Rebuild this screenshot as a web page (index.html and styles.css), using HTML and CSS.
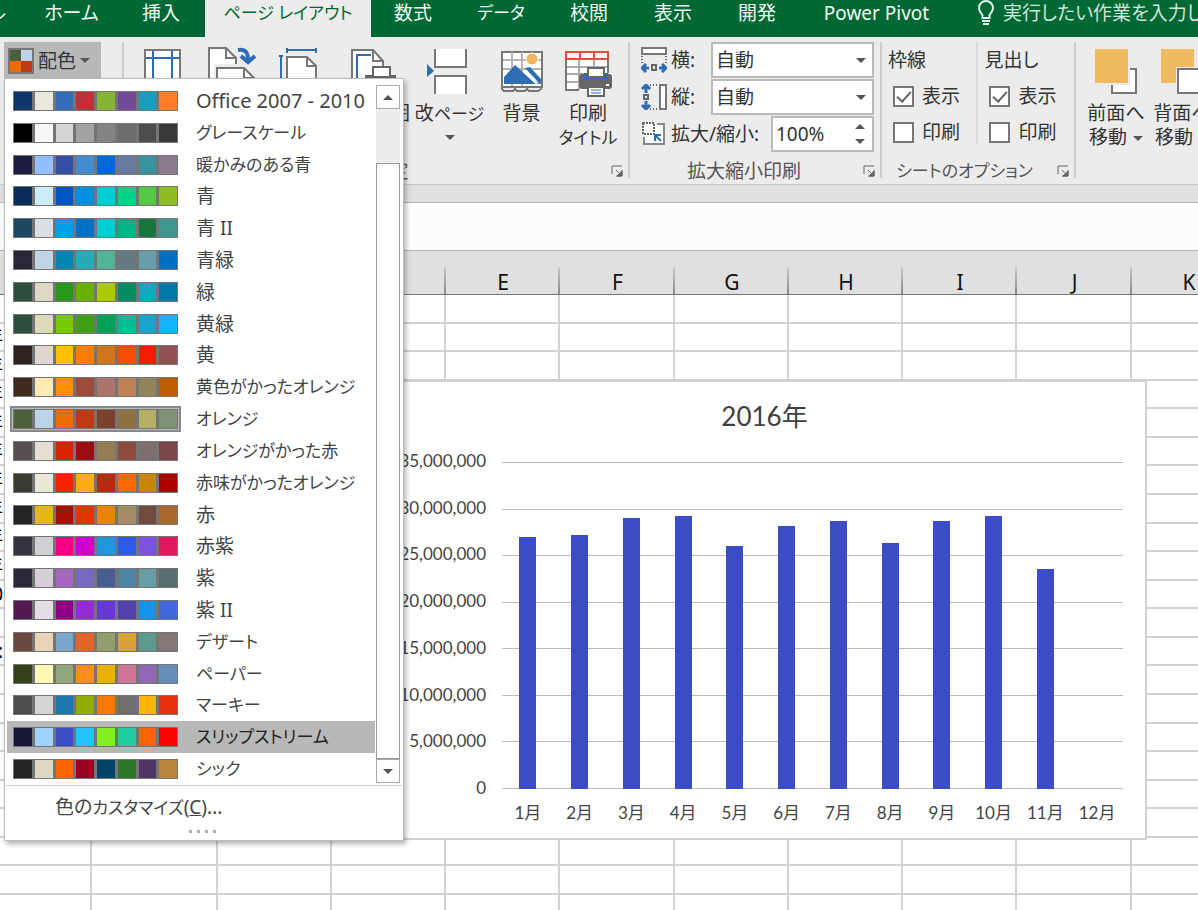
FILE: index.html
```html
<!DOCTYPE html>
<html lang="ja">
<head>
<meta charset="utf-8">
<title>ページ レイアウト</title>
<link rel="stylesheet" href="styles.css">
</head>
<body>
<div class="app">
  <nav class="tabs">
    <button class="tab tab-file">ファイル</button>
    <button class="tab tab-home">ホーム</button>
    <button class="tab tab-insert">挿入</button>
    <button class="tab tab-layout active kana">ページ レイアウト</button>
    <button class="tab">数式</button>
    <button class="tab tab-data kana">データ</button>
    <button class="tab">校閲</button>
    <button class="tab">表示</button>
    <button class="tab">開発</button>
    <button class="tab tab-pivot">Power Pivot</button>
    <button class="tell-me">
      <svg width="18" height="26" viewBox="0 0 18 26" fill="none" stroke="#e4f2ea" stroke-width="2"><path d="M5.5 18v-3C3.500 12.500 2 10.500 2 8a7 7 0 0 1 14 0c0 2.500-1.500 4.500-3.500 7v3z"/><path d="M5 21h8M6 24h6"/></svg>
      <span>実行したい作業を入力してください</span>
    </button>
  </nav>

  <div class="ribbon">
    <section class="group group-theme">
      <div class="theme-wrap">
        <button class="colors-button">
          <svg width="26" height="26" viewBox="0 0 26 26"><rect width="26" height="26" fill="#777"/><path fill="#4d5f3a" d="M2 2h11v11H2z"/><path fill="#bcd3e8" d="M13 2h11v11H13z"/><path fill="#ee6c00" d="M2 13h11v11H2z"/><path fill="#bd3b14" d="M13 13h11v11H13z"/></svg>
          <span>配色</span><i class="caret"></i>
        </button>
        <div class="menu">
          <div class="menu-main">
            <div class="palette-list" id="palettes"></div>
            <div class="scrollbar">
              <button class="scroll-button" aria-label="上へ"><i class="caret up"></i></button>
              <div class="track"><div class="thumb"></div></div>
              <button class="scroll-button" aria-label="下へ"><i class="caret"></i></button>
            </div>
          </div>
          <button class="customize">色の<span class="kana">カスタマイズ</span>(<u>C</u>)...</button>
          <div class="grip"><i></i><i></i><i></i><i></i></div>
        </div>
      </div>
    </section>

    <section class="group group-page">
      <div class="group-body">
        <button class="big w68"><svg width="44" height="54" viewBox="0 0 44 54" fill="none"><rect x="5" y="3" width="35" height="46" fill="#fff" stroke="#777" stroke-width="2"/><path d="M13 4v44M32 4v44M6 11h33" stroke="#2e6db4" stroke-width="2"/></svg><span>余白</span></button>
        <button class="big w68"><svg width="52" height="54" viewBox="0 0 52 54" fill="none"><path d="M5 49V1h17l10 10v38z" fill="#fff" stroke="#777" stroke-width="2"/><path d="M22 1v10h10" stroke="#777" stroke-width="2"/><path d="M10 17h35v32H10z" fill="#ececec"/><path d="M13 49V21h27l10 10v18z" fill="#fff" stroke="#777" stroke-width="2"/><path d="M40 21v10h10" stroke="#777" stroke-width="2"/><path d="M34 3c8-1 10 3 10 10" stroke="#2e6db4" stroke-width="4"/><path d="M37 9l7 6 7-6" stroke="#2e6db4" stroke-width="4"/></svg><span>印刷の<br>向き</span></button>
        <button class="big w71"><svg width="44" height="54" viewBox="0 0 44 54" fill="none"><path d="M9 49V10h20l9 9v30z" fill="#fff" stroke="#777" stroke-width="2"/><path d="M29 10v9h9" stroke="#777" stroke-width="2"/><path d="M9 3h29M9 1v5M38 1v5M3 9v41M1 9h4" stroke="#2e6db4" stroke-width="2"/></svg><span class="kana">サイズ</span></button>
        <button class="big w74"><svg width="52" height="54" viewBox="0 0 52 54" fill="none"><path d="M6 49V3h21l10 11v35z" fill="#fff" stroke="#777" stroke-width="2"/><path d="M27 3v11h10" stroke="#777" stroke-width="2"/><path d="M11 40V8h14" stroke="#2e6db4" stroke-width="2"/><path d="M19 28h31v16H19z" fill="#666"/><path d="M27 20h17v10H27z" fill="#fff" stroke="#666" stroke-width="2"/></svg><span>印刷範囲</span></button>
        <button class="big w81"><svg width="46" height="54" viewBox="0 0 46 54" fill="none"><path d="M8 2v18h31V2" fill="#fff" stroke="#777" stroke-width="2"/><path d="M8 47V29h31v18" fill="#fff" stroke="#777" stroke-width="2"/><path d="M0 17v13l7-6z" fill="#2e6db4"/></svg><span>改<span class="kana">ページ</span></span><i class="caret"></i></button>
        <button class="big w63"><svg width="44" height="54" viewBox="0 0 44 54" fill="none"><path d="M2 5h40v35H2z" fill="#fff" stroke="#777" stroke-width="2"/><path d="M12 5v34M22 5v34M3 13h38M3 22h38" stroke="#b5b5b5" stroke-width="2"/><circle cx="32" cy="12" r="6" fill="#f0b55e" stroke="#fff"/><path d="M4 37V30l11-12 10 9 15 10z" fill="#2e6db4"/><path d="M25 21l5-1 11 12v5h-1z" fill="#2e6db4"/><path d="M23 24l14 13" stroke="#fff" stroke-width="2"/><path d="M2 40v2l2 2h9l2-2v-2m0 2l2 2h8l2-2v-2m0 2l2 2h9l3-2v-2" stroke="#777" stroke-width="2"/></svg><span>背景</span></button>
        <button class="big w70"><svg width="48" height="54" viewBox="0 0 48 54" fill="none"><path d="M2 5h42v38H2z" fill="#fff"/><path d="M2 20h42M2 27h20M2 35h20M15 13v30M30 13v14" stroke="#aaa" stroke-width="2"/><path d="M2 12v31h13M44 12v14" stroke="#777" stroke-width="2"/><path d="M2 5h42v7H2zM16 5v7M30 5v7" fill="#fff" stroke="#e34f36" stroke-width="2"/><path d="M15 30q0-3 3-3h27q3 0 3 3v9q0 3-3 3H18q-3 0-3-3z" fill="#666"/><path d="M20 26h24v6H20z" fill="#2e6db4"/><path d="M24 21h16v9H24z" fill="#fff" stroke="#666" stroke-width="2"/><path d="M24 40h16v9H24z" fill="#fff" stroke="#666" stroke-width="2"/><path d="M27 43h10M27 46h10" stroke="#2e6db4" stroke-width="1"/><path d="M42 38h3" stroke="#fff" stroke-width="2"/></svg><span>印刷<br><span class="kana">タイトル</span></span></button>
      </div>
      <footer class="group-name"><span>ページ設定</span><svg class="launcher" width="12" height="12" viewBox="0 0 12 12" fill="none" stroke="#666"><path d="M1 9V1h10M5 5l4 4M11 5v6H5"/><path d="M11 6v5H6z" fill="#666"/></svg></footer>
    </section>

    <section class="group group-scale">
      <div class="group-body scale-body">
        <div class="field"><svg width="26" height="26" viewBox="0 0 26 26" fill="none"><path d="M1 1h24v6H1z" fill="#fff" stroke="#777" stroke-width="2"/><path d="M1 9v7M25 9v7" stroke="#666" stroke-width="2" stroke-dasharray="1 2"/><path d="M11 18h4v5h-4z" stroke="#666" stroke-width="2"/><path d="M1 21h7M5 17l-4 4 4 4M25 21h-7M21 17l4 4-4 4" stroke="#2e6db4" stroke-width="3"/></svg><label for="w">横:</label><span class="combo"><select id="w"><option>自動</option></select><i class="caret"></i></span></div>
        <div class="field"><svg width="26" height="26" viewBox="0 0 26 26" fill="none"><path d="M19 1h6v24h-6z" fill="#fff" stroke="#777" stroke-width="2"/><path d="M9 1h8M9 25h8" stroke="#666" stroke-width="2" stroke-dasharray="1 2"/><path d="M3 11h4v4H3z" stroke="#666" stroke-width="2"/><path d="M5 1v8M1 5l4-4 4 4M5 25v-8M1 21l4 4 4-4" stroke="#2e6db4" stroke-width="3"/></svg><label for="h">縦:</label><span class="combo"><select id="h"><option>自動</option></select><i class="caret"></i></span></div>
        <div class="field"><svg width="26" height="26" viewBox="0 0 26 26" fill="none"><path d="M3 3h20v20H3z" fill="#fff"/><path d="M16 3h7v20H3v-7" stroke="#888" stroke-width="2"/><path d="M2 2h11v11H2z" fill="#fff" stroke="#666" stroke-width="2" stroke-dasharray="2 1"/><path d="M14 14l6 6M14 20v-6h6" stroke="#2e6db4" stroke-width="2"/></svg><label for="z">拡大/縮小:</label><span class="combo spin"><input id="z" type="text" value="100%"><span class="spin-arrows"><i class="caret up"></i><i class="caret"></i></span></span></div>
      </div>
      <footer class="group-name"><span>拡大縮小印刷</span><svg class="launcher" width="12" height="12" viewBox="0 0 12 12" fill="none" stroke="#666"><path d="M1 9V1h10M5 5l4 4M11 5v6H5"/><path d="M11 6v5H6z" fill="#666"/></svg></footer>
    </section>

    <section class="group group-sheet">
      <div class="group-body sheet-body">
        <div class="option-col"><span>枠線</span><label><input type="checkbox" checked>表示</label><label><input type="checkbox">印刷</label></div>
        <div class="option-col"><span>見出し</span><label><input type="checkbox" checked>表示</label><label><input type="checkbox">印刷</label></div>
      </div>
      <footer class="group-name"><span class="kana">シートのオプション</span><svg class="launcher" width="12" height="12" viewBox="0 0 12 12" fill="none" stroke="#666"><path d="M1 9V1h10M5 5l4 4M11 5v6H5"/><path d="M11 6v5H6z" fill="#666"/></svg></footer>
    </section>

    <section class="group group-arrange">
      <div class="group-body">
        <button class="big w66"><svg width="44" height="54" viewBox="0 0 44 54" fill="none"><path d="M18 22h24v24H18z" fill="#fff" stroke="#777" stroke-width="2"/><path d="M0 0h36v38H0z" fill="#ececec"/><path d="M1 2h33v34H1z" fill="#f0bb60"/></svg><span>前面へ<br>移動 <i class="caret"></i></span></button>
        <button class="big w66"><svg width="44" height="54" viewBox="0 0 44 54" fill="none"><path d="M1 2h33v34H1z" fill="#f0bb60"/><path d="M16 20h28v28H16z" fill="#ececec"/><path d="M18 22h24v24H18z" fill="#fff" stroke="#777" stroke-width="2"/></svg><span>背面へ<br>移動 <i class="caret"></i></span></button>
      </div>
    </section>
  </div>

  <div class="band"></div>
  <div class="formula-bar"></div>

  <main class="sheet">
    <table class="grid">
      <colgroup><col class="c91"><col class="c126"><col class="c114"><col class="c114"><col class="c114"><col class="c115"><col class="c114"><col class="c114"><col class="c114"><col class="c115"><col class="c114"></colgroup>
      <thead><tr><th>A</th><th>B</th><th>C</th><th>D</th><th>E</th><th>F</th><th>G</th><th>H</th><th>I</th><th>J</th><th>K</th></tr></thead>
      <tbody id="rows"></tbody>
    </table>
    <figure class="chart">
      <figcaption>2016年</figcaption>
      <div class="y-axis"><span>35,000,000</span><span>30,000,000</span><span>25,000,000</span><span>20,000,000</span><span>15,000,000</span><span>10,000,000</span><span>5,000,000</span><span>0</span></div>
      <div class="plot">
        <div class="lines"><i></i><i></i><i></i><i></i><i></i><i></i><i></i><i></i></div>
        <div class="bars" id="bars"></div>
      </div>
      <div class="x-axis" id="months"></div>
    </figure>
  </main>
</div>
<script src="script.js"></script>
</body>
</html>
```
FILE: styles.css
```css
* { box-sizing: border-box; }
body, button, input, select {
  font-family: "Noto Sans", "Noto Sans CJK JP", sans-serif;
  font-size: 19px;
  line-height: 24px;
  font-feature-settings: "palt";
  color: #444;
}
body { margin: 0; background: #fff; }
button { border: 0; padding: 0; background: none; white-space: nowrap; }
.kana { font-size: 17px; }
.app { height: 100vh; display: flex; flex-direction: column; overflow: hidden; }

.tabs { display: flex; flex: none; height: 37px; background: #006834; overflow: hidden; }
.tab { flex: none; width: 84px; height: 37px; padding-bottom: 12px; color: #f0f8f3; display: flex; justify-content: center; align-items: center; }
.tab-file { width: 26px; justify-content: flex-end; padding-right: 20px; }
.tab-home { width: 91px; }
.tab-insert { width: 88px; }
.tab-layout { width: 166px; }
.tab-data { width: 92px; }
.tab-pivot { width: 155px; }
.tab.active { background: #ececec; color: #006834; }
.tell-me { flex: none; display: flex; gap: 8px; align-items: center; padding: 0 0 12px 23px; color: #cfe5d8; }

.ribbon { flex: none; display: flex; height: 148px; background: #ececec; border-bottom: 1px solid #c8c8c8; }
.group { flex: none; position: relative; display: flex; flex-direction: column; justify-content: space-between; border-right: 2px solid #ccc; margin: 5px 0 6px; }
.group-theme { width: 124px; padding-left: 4px; }
.group-page { width: 506px; padding-left: 4px; }
.group-scale { width: 252px; padding-left: 11px; }
.group-sheet { width: 194px; padding-left: 6px; }
.group-arrange { border: 0; padding-left: 7px; }
.group-body { display: flex; }
.group-name { display: flex; align-items: center; color: #555; padding-right: 5px; height: 14px; }
.group-name span { flex: 1; text-align: center; padding-right: 16px; white-space: nowrap; }
.launcher { flex: none; }

.caret { display: inline-block; border: 5px solid transparent; border-top-color: #555; border-bottom: 0; vertical-align: middle; }
.caret.up { border: 5px solid transparent; border-bottom-color: #555; border-top: 0; }

.theme-wrap { position: relative; align-self: flex-start; }
.colors-button { display: flex; align-items: center; gap: 4px; width: 97px; height: 37px; padding-left: 4px; background: #b8b8b8; color: #333; }

.big { flex: none; display: flex; flex-direction: column; align-items: center; padding-top: 5px; color: #333; }
.big svg { flex: none; }
.big > .caret { margin-top: 9px; }
.big .caret { margin-left: 1px; }
.w63 { width: 63px; } .w66 { width: 66px; } .w68 { width: 68px; } .w70 { width: 70px; }
.w71 { width: 71px; } .w74 { width: 74px; } .w81 { width: 81px; }

.scale-body { flex-direction: column; gap: 1px; }
.field { display: flex; align-items: center; gap: 4px; color: #333; white-space: nowrap; padding-right: 6px; }
.combo { position: relative; width: 163px; height: 36px; margin-left: auto; border: 2px solid #bababa; background: #fff; display: flex; align-items: center; }
.combo select, .combo input { flex: 1; width: 100%; min-width: 0; height: 32px; appearance: none; border: 0; padding: 0 0 0 3px; background: transparent; color: #333; outline: 0; }
.combo > .caret { position: absolute; right: 6px; pointer-events: none; }
.spin { width: 103px; }
.spin-arrows { flex: none; display: flex; flex-direction: column; gap: 10px; padding-right: 7px; }

.option-col { display: flex; flex-direction: column; gap: 12px; width: 97px; padding-top: 6px; color: #333; }
.option-col + .option-col { border-left: 2px solid #dadada; margin-left: -6px; padding-left: 6px; width: 100px; }
.option-col label { display: flex; align-items: center; gap: 8px; padding-left: 5px; white-space: nowrap; }
.option-col input { appearance: none; margin: 0; width: 21px; height: 21px; border: 2px solid #777; background: #fff; display: grid; place-items: center; }
.option-col input:checked::before { content: ""; width: 6px; height: 12px; border: solid #666; border-width: 0 2px 2px 0; transform: rotate(42deg); margin-bottom: 4px; }

.band { flex: none; height: 18px; background: #e0e0e0; border-bottom: 1px solid #b8b8b8; }
.formula-bar { flex: none; height: 47px; background: #fcfcfc; }

.sheet { flex: 1; position: relative; overflow: hidden; border-top: 1px solid #b4b4b4; }
.grid { border-collapse: separate; border-spacing: 0; table-layout: fixed; width: 1246px; }
.c91 { width: 92px; } .c114 { width: 114px; } .c115 { width: 115px; } .c126 { width: 126px; }
.grid th { height: 44px; padding: 19px 0 0; font-size: 21px; font-weight: 400; color: #111; border-bottom: 1px solid #777; background: linear-gradient(#c8c8c8, #888) right bottom / 2px 27px no-repeat #e0e0e0; }
.grid td { height: 29px; padding: 0; line-height: 24px; color: #000; border-right: 2px solid #d2d2d2; border-bottom: 2px solid #d2d2d2; }
.grid tr:nth-child(7n+2) td, .grid tr:nth-child(7n+4) td, .grid tr:nth-child(7n+6) td { height: 28px; }
.tail { display: block; width: 3px; direction: rtl; white-space: nowrap; }

.chart { position: absolute; left: 380px; top: 129px; width: 767px; height: 460px; margin: 0; padding: 0 22px 0 0; background: #fff; border: 2px solid #d0d0d0; display: grid; grid-template-columns: 104px 1fr; grid-template-rows: 80px 327px 1fr; column-gap: 16px; font-family: Lato, "Noto Sans CJK JP", sans-serif; font-size: 17px; color: #444; }
.chart figcaption { grid-column: 1 / 3; text-align: center; font-size: 26px; line-height: 32px; padding: 18px 0 0 24px; color: #404040; }
.y-axis { display: flex; flex-direction: column; justify-content: space-between; text-align: right; margin: -13px 0 -11px; }
.plot { position: relative; }
.lines { height: 100%; display: flex; flex-direction: column; justify-content: space-between; }
.lines i { height: 1px; background: #bbb; }
.bars { position: absolute; inset: 0; display: grid; grid-template-columns: repeat(12, 1fr); align-items: end; justify-items: center; }
.bar { width: 17px; background: #3a4dc4; }
.x-axis { grid-column: 2; display: grid; grid-template-columns: repeat(12, 1fr); text-align: center; padding-top: 12px; white-space: nowrap; }

.menu { position: absolute; z-index: 5; left: 0; top: 36px; width: 400px; background: #fff; border: 1px solid #bdbdbd; box-shadow: 2px 3px 5px rgba(0, 0, 0, .3); }
.menu-main { display: flex; height: 707px; padding: 6px 2px 0 1px; gap: 1px; margin: 0 1px; border-bottom: 1px solid #d0d0d0; }
.palette-list { flex: 1; height: 700px; display: grid; grid-template-rows: repeat(22, 1fr); }
.palette { display: flex; align-items: center; gap: 15px; padding-left: 3px; color: #444; }
.palette.hover { background: #b8b8b8; color: #222; }
.latin { font-size: 20px; }
.swatch-frame { padding: 1px; border: 2px solid transparent; }
.palette.chosen .swatch-frame { border-color: #888; background: #bbb; }
.swatches { display: grid; grid-template-columns: repeat(8, 1fr); gap: 3px; width: 165px; height: 20px; padding: 1px 1px 1px; background: #757575; }
.scrollbar { width: 24px; height: 698px; display: flex; flex-direction: column; background: #ededed; }
.scroll-button { height: 24px; border: 1px solid #aaa; background: #fff; display: grid; place-items: center; }
.track { flex: 1; display: flex; flex-direction: column; padding-top: 54px; }
.thumb { flex: 1; border: 1px solid #999; background: #fff; }
.customize { display: block; padding: 9px 0 6px 50px; }
.grip { display: flex; justify-content: center; gap: 5px; height: 14px; padding: 4px 4px 0 0; }
.grip i { width: 3px; height: 3px; background: #a4b0bd; }
```
FILE: script.js
```js
const palettes = [
  ["Office 2007 - 2010", "0f366d ebe9db 346cb8 c22f36 85b436 724997 189fbd ff7f24"],
  ["グレースケール", "000000 f7f7f7 d6d6d6 a3a3a3 848484 6d6d6d 4d4d4d 393939"],
  ["暖かみのある青", "1c1b42 94bdff 344fa5 438dce 0067da 687b9e 37949f 8d7b90"],
  ["青", "0a2c5b ceebf9 0057c3 008fdc 00ced5 00d287 54c942 8bbc20"],
  ["青 II", "1d4861 d8dee1 009fe7 0070c5 00ccd3 00b486 16783c 40968e"],
  ["青緑", "2a2838 c1d4e3 0085b5 28abb7 50b596 647a7e 699daa 0070c4"],
  ["緑", "2e4e40 dfd9c6 2b961c 6baf00 adca00 008b62 0aabbe 0078a6"],
  ["黄緑", "2e4e40 dddabe 78c900 409f18 00a157 00be94 1aa4ca 12b4ff"],
  ["黄", "2e231e dfd6d1 ffc000 ff7d00 ce761e fa4d00 f41b00 935155"],
  ["黄色がかったオレンジ", "402b22 ffe9b7 fa9000 9f4b3b ad736d bf8353 92845d bf5c00"],
  ["オレンジ", "4d5f3a bcd4e8 ee6c00 bd3b14 7d402d 8f7141 b5b164 7e9174"],
  ["オレンジがかった赤", "585050 e4dfd2 d92400 990e14 947c54 8c4b3d 7e6e70 7b474a"],
  ["赤味がかったオレンジ", "3b3c31 eae8d9 f42400 ffab1a b52c13 ff6700 c98700 b10000"],
  ["赤", "242424 e4b811 a31100 dd3700 e78500 a68b67 704b3e ab682f"],
  ["赤紫", "343441 cfd0d3 f30087 cd00cb 2295db 2e5beb 7d52df de175f"],
  ["紫", "2a2838 d6ced6 a668bf 756abd 465f90 4c86a4 669ea8 536f70"],
  ["紫 II", "551953 e5dde6 8e0083 942cd1 6638d7 5543ad 1393ef 4067db"],
  ["デザート", "694940 ead4b5 7ca7cd e26529 929e6c d6a239 5c9b8b 857677"],
  ["ペーパー", "344018 fff9b5 93a77e ff8c20 e9b100 cf7598 8f68b6 658db9"],
  ["マーキー", "4c4c4c d5d5d5 1c78a8 8fae00 ff7900 6e6e6e ffb700 e72f0b"],
  ["スリップストリーム", "171a36 9fd3ff 3a4dc4 24c4f9 84f11d 1ecca0 ff6300 ff0000"],
  ["シック", "242424 ded9c5 ff6400 990021 004369 2d7627 523366 b9863c"]
];
const list = document.getElementById("palettes");
for (const [name, colors] of palettes) {
  const row = document.createElement("button");
  const script = /[ぁ-ヶ]/.test(name) ? "kana" : /^[A-Z]/.test(name) ? "latin" : "kanji";
  row.className = "palette" + (name === "オレンジ" ? " chosen" : "") + (name === "スリップストリーム" ? " hover" : "");
  row.innerHTML = '<span class="swatch-frame"><span class="swatches">' +
    colors.split(" ").map(c => `<i style="background:#${c}"></i>`).join("") +
    `</span></span><span class="${script}">${name}</span>`;
  list.append(row);
}

const tails = ["", "年", "年", "年", "年", "年", "年", "年", "年", "年", "0", "", ":"];
const rows = document.getElementById("rows");
for (let r = 0; r < 24; r++) {
  const tr = document.createElement("tr");
  tr.innerHTML = `<td>${tails[r] ? `<span class="tail">${tails[r]}</span>` : ""}</td>` + "<td></td>".repeat(10);
  rows.append(tr);
}

const values = [77, 77.6, 83, 83.4, 74.2, 80.5, 82, 75.2, 82, 83.4, 67.4, 0];
document.getElementById("bars").innerHTML = values.map(v => `<div class="bar" style="height:${v}%"></div>`).join("");
document.getElementById("months").innerHTML = values.map((v, i) => `<span>${i + 1}月</span>`).join("");
```
